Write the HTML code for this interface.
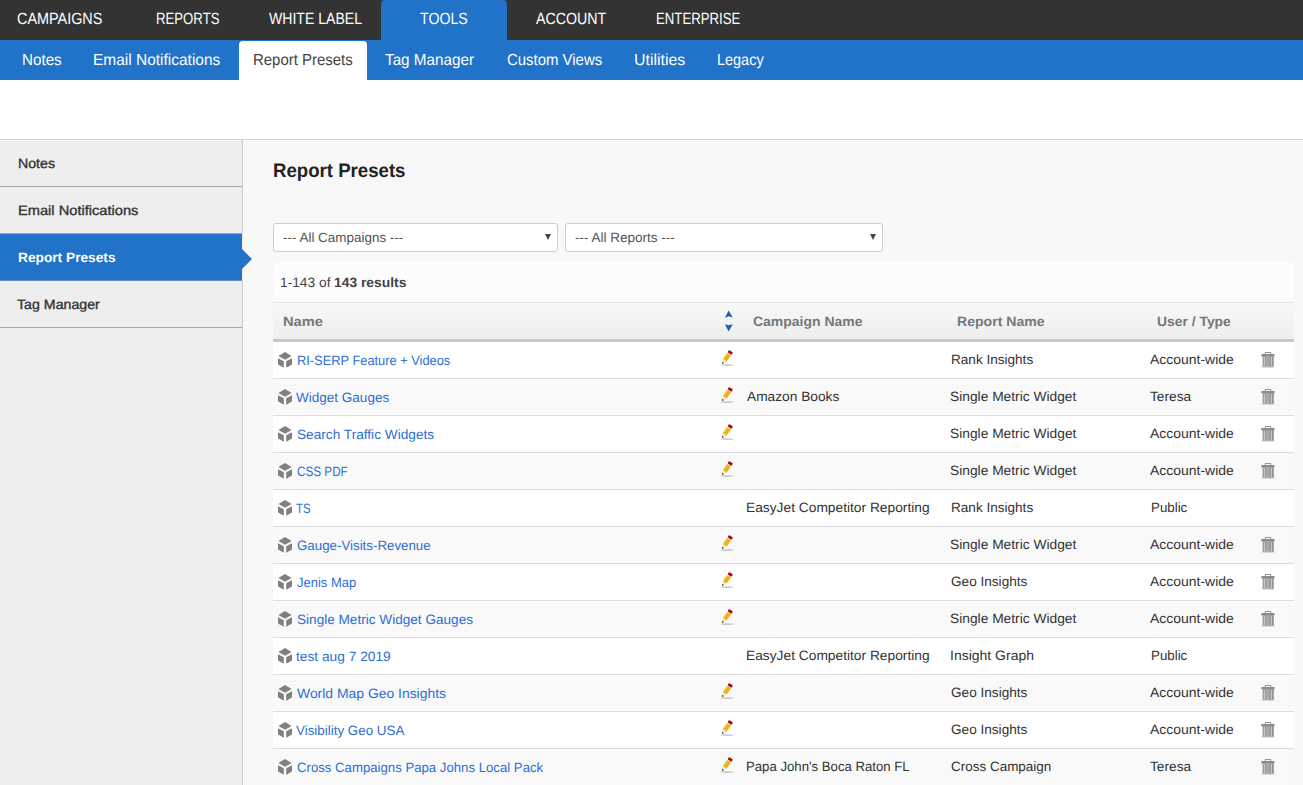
<!DOCTYPE html>
<html><head><meta charset="utf-8"><title>Report Presets</title>
<style>
*{box-sizing:border-box;margin:0;padding:0}
html,body{width:1303px;height:785px;overflow:hidden;background:#fff;font-family:"Liberation Sans",sans-serif;color:#333;text-rendering:geometricPrecision}
a,span,b,h1{white-space:nowrap;transform-origin:0 50%}
#top{position:absolute;left:0;top:0;width:1303px;height:40px;background:#333}
#top a{position:absolute;top:0;height:40px;line-height:39px;color:#fff;font-size:16.25px}
#top .on{position:absolute;left:381px;top:0;width:126px;height:40px;background:#2172c9;border-radius:4px 4px 0 0}
#sub{position:absolute;left:0;top:40px;width:1303px;height:40px;background:#2172c9}
#sub a{position:absolute;top:0;height:40px;line-height:39px;color:#fff;font-size:16px}
#sub a.dk{color:#444}
#sub .on{position:absolute;left:239px;top:1px;width:128px;height:39px;background:#fff;border-radius:4px 4px 0 0}
#band{position:absolute;left:0;top:80px;width:1303px;height:60px;background:#fff;border-bottom:1px solid #d4d4d4}
#side{z-index:2;position:absolute;left:0;top:140px;width:243px;height:645px;background:#eee;border-right:1px solid #ccc}
#side .it{height:47px;border-bottom:1px solid #a3a8ad;position:relative}
#side .it.on{background:#2172c9;border-bottom-color:#5f8dbd;width:242px}
#side .it.on:before{content:"";position:absolute;left:242px;top:0;width:1px;height:47px;background:#f0f0f0}
#side .it.on:after{content:"";position:absolute;left:242px;top:15px;border-left:10px solid #2172c9;border-top:10px solid transparent;border-bottom:10px solid transparent}
#side a{position:absolute;height:47px;line-height:48px;font-size:13.6px;color:#333;font-weight:bold}
#side a{font-weight:normal;-webkit-text-stroke:0.35px #333}
#side a.on{color:#fff;font-weight:bold;-webkit-text-stroke:0}
#m1{top:0}#m2{top:47px}#m3{top:94px}#m4{top:141px}
#main{position:absolute;left:243px;top:140px;width:1060px;height:645px;background:#f8f8f8}
#main>*{margin-left:-243px;margin-top:-140px}
h1{position:absolute;top:159px;font-size:19.5px;line-height:24px;font-weight:bold;color:#222}
.sel{position:absolute;top:223px;height:29px;background:#fff;border:1px solid #cfcfcf;border-radius:3px}
.sel i{position:absolute;right:6px;top:10px;border-left:3px solid transparent;border-right:3px solid transparent;border-top:6px solid #444}
.st{position:absolute;top:223px;line-height:29px;font-size:13.4px;color:#555}
#res{position:absolute;left:273px;top:262px;width:1021px;height:41px;background:#fcfcfc;border-bottom:1px solid #e6e6e6;font-size:13.5px;color:#444}
#res span,#res b{position:absolute;top:0;line-height:42px;margin-left:-273px}
#th{position:absolute;left:273px;top:303px;width:1021px;height:39px;background:linear-gradient(#f8f8f8,#eee);border-bottom:3px solid #c8c8c8;font-size:13.5px;font-weight:bold;color:#777}
#th span{position:absolute;top:0;line-height:38px;margin-left:-273px}
.r{position:absolute;left:273px;width:1021px;height:37px;border-bottom:1px solid #ddd;background:#fff;font-size:13.5px;color:#333}
.r.e{background:#f9f9f9}
.r span,.r a{position:absolute;top:0;line-height:35px;margin-left:-273px}
.r a{color:#2e6fd4;line-height:37px}
.cube{position:absolute;left:5px;top:10px;width:14px;height:16px}
.pen{position:absolute;left:447px;top:8px;width:16px;height:16px}
.tr{position:absolute;left:987px;top:10px;width:16px;height:16px}
#sort{position:absolute;left:451px;top:7px;width:9px;height:22px}
</style></head><body>
<svg width="0" height="0" style="position:absolute"><defs>
<linearGradient id="tg" x1="0" x2="1" y1="0" y2="0"><stop offset="0" stop-color="#909090"/><stop offset=".45" stop-color="#acacac"/><stop offset="1" stop-color="#858585"/></linearGradient>
<linearGradient id="pg" x1="0" x2="1" y1="0" y2="0"><stop offset="0" stop-color="#f3c84a"/><stop offset=".5" stop-color="#e8ac10"/><stop offset="1" stop-color="#eebb30"/></linearGradient>
<symbol id="cube" viewBox="0 0 14 16"><path fill="#808080" d="M7,0 L13.6,4 L7,7.8 L0.4,4Z M0,6.2 L5.8,9.2 L5.8,15.8 L0,12.6Z M14,6.2 L8.2,9.2 L8.2,15.8 L14,12.6Z"/></symbol>
<symbol id="pen" viewBox="0 0 16 16"><ellipse cx="7.2" cy="15.1" rx="6.8" ry="0.8" fill="#000" opacity=".2"/><g transform="translate(2.1,14) rotate(35.2)"><path d="M0,0 L-1,-2 L1,-2Z" fill="#111"/><path d="M-1,-2 L-2.4,-4.6 L2.4,-4.6 L1,-2Z" fill="#f6e2b4"/><rect x="-2.4" y="-12.2" width="4.8" height="7.6" fill="url(#pg)"/><rect x="-2.4" y="-12.9" width="4.8" height="0.8" fill="#dde9ee"/><rect x="-2.4" y="-15.6" width="4.8" height="2.8" rx="0.9" fill="#ad0c0c"/></g></symbol>
<symbol id="tr" viewBox="0 0 16 16"><ellipse cx="8" cy="15" rx="7.6" ry="0.8" fill="#000" opacity=".18"/><rect x="5.3" y="0.5" width="5.4" height="2.4" fill="#fff" stroke="#969696" stroke-width="1"/><rect x="2.6" y="4.2" width="11.1" height="10.5" fill="url(#tg)"/><rect x="3.8" y="4.8" width="1.1" height="9.3" fill="#c9c9c9"/><rect x="11" y="4.8" width="1.1" height="9.3" fill="#c9c9c9"/><rect x="1.2" y="2" width="13.5" height="2.5" rx="0.9" fill="#8c8c8c"/></symbol>
</defs></svg>
<div id="top"><div class="on"></div><a id="n1" style="left:17.14px;transform:scaleX(0.8862)">CAMPAIGNS</a><a id="n2" style="left:155.51px;transform:scaleX(0.8110)">REPORTS</a><a id="n3" style="left:269.36px;transform:scaleX(0.8655)">WHITE LABEL</a><a id="n4" style="left:419.62px;transform:scaleX(0.8714)">TOOLS</a><a id="n5" style="left:535.75px;transform:scaleX(0.8745)">ACCOUNT</a><a id="n6" style="left:655.53px;transform:scaleX(0.8117)">ENTERPRISE</a></div>
<div id="sub"><div class="on"></div><a id="s1" style="left:21.51px;transform:translateY(1px) scaleX(0.9501)">Notes</a><a id="s2" style="left:93.37px;transform:translateY(1px) scaleX(0.9670)">Email Notifications</a><a  class="dk" id="s3" style="left:253.14px;transform:translateY(1px) scaleX(0.9335)">Report Presets</a><a id="s4" style="left:385.01px;transform:translateY(1px) scaleX(0.9535)">Tag Manager</a><a id="s5" style="left:506.54px;transform:translateY(1px) scaleX(0.9334)">Custom Views</a><a id="s6" style="left:633.82px;transform:translateY(1px) scaleX(0.9926)">Utilities</a><a id="s7" style="left:717.13px;transform:translateY(1px) scaleX(0.9034)">Legacy</a></div>
<div id="band"></div>
<div id="side"><div class="it"></div><div class="it"></div><div class="it on"></div><div class="it"></div><a id="m1" style="left:17.53px;transform:scaleX(1.0422)">Notes</a><a id="m2" style="left:18.10px;transform:scaleX(1.0770)">Email Notifications</a><a  class="on" id="m3" style="left:17.51px;transform:scaleX(1.0088)">Report Presets</a><a id="m4" style="left:17.02px;transform:scaleX(1.0437)">Tag Manager</a></div>
<div id="main">
<h1 id="h1" style="left:272.73px;transform:scaleX(0.9547)">Report Presets</h1>
<div class="sel" style="left:273px;width:285px"><i></i></div><span  class="st" id="x1" style="left:282.96px;transform:scaleX(1.0042)">--- All Campaigns ---</span>
<div class="sel" style="left:565px;width:318px"><i></i></div><span  class="st" id="x2" style="left:574.73px;transform:scaleX(1.0087)">--- All Reports ---</span>
<div id="res"><span id="q1" style="left:280.31px;transform:scaleX(1.0186)">1-143 of</span><b id="q2" style="left:334.22px;transform:scaleX(1.0255)">143 results</b></div>
<div id="th"><span id="c1" style="left:283.17px;transform:scaleX(1.0851)">Name</span><svg id="sort" viewBox="0 0 9 22"><path fill="#1c5fb5" d="M4.6,0.4 L8.7,7.6 L4.7,6.3 L0.9,7.7Z M4.6,21.4 L0.9,14.2 L4.7,15.3 L8.7,14.2Z"/></svg><span id="c2" style="left:752.70px;transform:scaleX(1.0354)">Campaign Name</span><span id="c3" style="left:956.87px;transform:scaleX(1.0420)">Report Name</span><span id="c4" style="left:1156.70px;transform:scaleX(1.0282)">User / Type</span></div>
<div class="r" style="top:342px"><svg class="cube"><use href="#cube"/></svg><a id="a0" style="left:296.88px;transform:scaleX(0.9508)">RI-SERP Feature + Videos</a><svg class="pen"><use href="#pen"/></svg><span id="d0" style="left:950.61px;transform:scaleX(1.0046)">Rank Insights</span><span id="e0" style="left:1149.86px;transform:scaleX(1.0339)">Account-wide</span><svg class="tr"><use href="#tr"/></svg></div>
<div class="r e" style="top:379px"><svg class="cube"><use href="#cube"/></svg><a id="a1" style="left:296.33px;transform:scaleX(1.0015)">Widget Gauges</a><svg class="pen"><use href="#pen"/></svg><span id="b1" style="left:747.33px;transform:scaleX(1.0167)">Amazon Books</span><span id="d1" style="left:950.43px;transform:scaleX(1.0206)">Single Metric Widget</span><span id="e1" style="left:1149.96px;transform:scaleX(1.0169)">Teresa</span><svg class="tr"><use href="#tr"/></svg></div>
<div class="r" style="top:416px"><svg class="cube"><use href="#cube"/></svg><a id="a2" style="left:296.81px;transform:scaleX(1.0114)">Search Traffic Widgets</a><svg class="pen"><use href="#pen"/></svg><span id="d2" style="left:950.41px;transform:scaleX(1.0208)">Single Metric Widget</span><span id="e2" style="left:1149.86px;transform:scaleX(1.0339)">Account-wide</span><svg class="tr"><use href="#tr"/></svg></div>
<div class="r e" style="top:453px"><svg class="cube"><use href="#cube"/></svg><a id="a3" style="left:296.77px;transform:scaleX(0.8679)">CSS PDF</a><svg class="pen"><use href="#pen"/></svg><span id="d3" style="left:950.43px;transform:scaleX(1.0206)">Single Metric Widget</span><span id="e3" style="left:1149.85px;transform:scaleX(1.0340)">Account-wide</span><svg class="tr"><use href="#tr"/></svg></div>
<div class="r" style="top:490px"><svg class="cube"><use href="#cube"/></svg><a id="a4" style="left:296.49px;transform:scaleX(0.8435)">TS</a><span id="b4" style="left:746.11px;transform:scaleX(1.0196)">EasyJet Competitor Reporting</span><span id="d4" style="left:950.61px;transform:scaleX(1.0046)">Rank Insights</span><span id="e4" style="left:1151.08px;transform:scaleX(0.9865)">Public</span></div>
<div class="r e" style="top:527px"><svg class="cube"><use href="#cube"/></svg><a id="a5" style="left:296.78px;transform:scaleX(0.9858)">Gauge-Visits-Revenue</a><svg class="pen"><use href="#pen"/></svg><span id="d5" style="left:950.43px;transform:scaleX(1.0206)">Single Metric Widget</span><span id="e5" style="left:1149.85px;transform:scaleX(1.0340)">Account-wide</span><svg class="tr"><use href="#tr"/></svg></div>
<div class="r" style="top:564px"><svg class="cube"><use href="#cube"/></svg><a id="a6" style="left:297.47px;transform:scaleX(0.9623)">Jenis Map</a><svg class="pen"><use href="#pen"/></svg><span id="d6" style="left:951.06px;transform:scaleX(1.0071)">Geo Insights</span><span id="e6" style="left:1149.86px;transform:scaleX(1.0339)">Account-wide</span><svg class="tr"><use href="#tr"/></svg></div>
<div class="r e" style="top:601px"><svg class="cube"><use href="#cube"/></svg><a id="a7" style="left:296.80px;transform:scaleX(1.0066)">Single Metric Widget Gauges</a><svg class="pen"><use href="#pen"/></svg><span id="d7" style="left:950.43px;transform:scaleX(1.0206)">Single Metric Widget</span><span id="e7" style="left:1149.85px;transform:scaleX(1.0340)">Account-wide</span><svg class="tr"><use href="#tr"/></svg></div>
<div class="r" style="top:638px"><svg class="cube"><use href="#cube"/></svg><a id="a8" style="left:296.22px;transform:scaleX(1.0176)">test aug 7 2019</a><span id="b8" style="left:746.11px;transform:scaleX(1.0196)">EasyJet Competitor Reporting</span><span id="d8" style="left:950.41px;transform:scaleX(1.0366)">Insight Graph</span><span id="e8" style="left:1151.08px;transform:scaleX(0.9865)">Public</span></div>
<div class="r e" style="top:675px"><svg class="cube"><use href="#cube"/></svg><a id="a9" style="left:296.61px;transform:scaleX(1.0308)">World Map Geo Insights</a><svg class="pen"><use href="#pen"/></svg><span id="d9" style="left:951.04px;transform:scaleX(1.0074)">Geo Insights</span><span id="e9" style="left:1149.85px;transform:scaleX(1.0340)">Account-wide</span><svg class="tr"><use href="#tr"/></svg></div>
<div class="r" style="top:712px"><svg class="cube"><use href="#cube"/></svg><a id="a10" style="left:296.30px;transform:scaleX(0.9911)">Visibility Geo USA</a><svg class="pen"><use href="#pen"/></svg><span id="d10" style="left:951.06px;transform:scaleX(1.0071)">Geo Insights</span><span id="e10" style="left:1149.86px;transform:scaleX(1.0339)">Account-wide</span><svg class="tr"><use href="#tr"/></svg></div>
<div class="r e" style="top:749px"><svg class="cube"><use href="#cube"/></svg><a id="a11" style="left:296.72px;transform:scaleX(0.9763)">Cross Campaigns Papa Johns Local Pack</a><svg class="pen"><use href="#pen"/></svg><span id="b11" style="left:746.18px;transform:scaleX(0.9761)">Papa John's Boca Raton FL</span><span id="d11" style="left:951.04px;transform:scaleX(0.9976)">Cross Campaign</span><span id="e11" style="left:1149.96px;transform:scaleX(1.0169)">Teresa</span><svg class="tr"><use href="#tr"/></svg></div>
</div>
</body></html>
